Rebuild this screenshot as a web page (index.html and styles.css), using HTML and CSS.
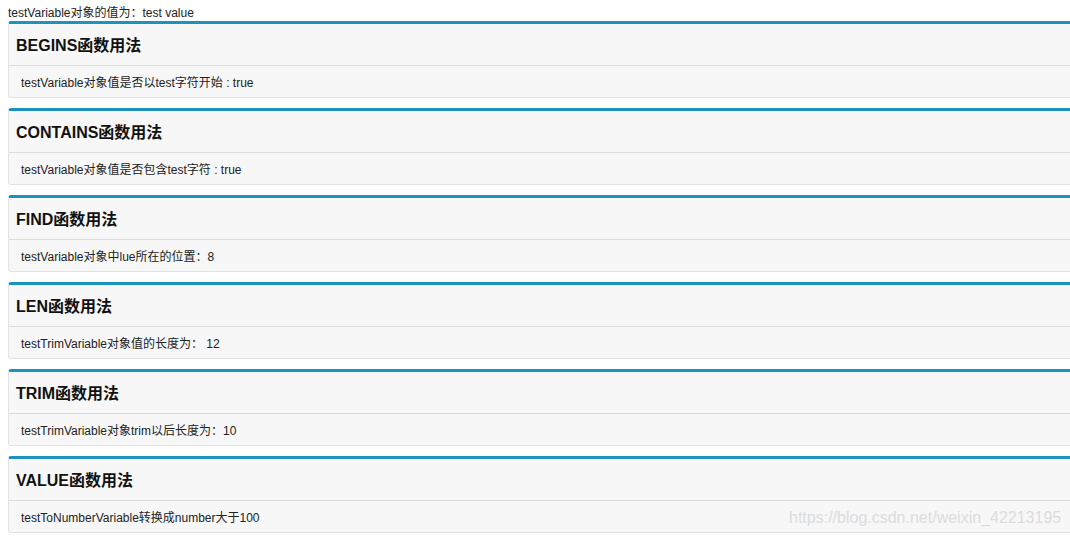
FILE: index.html
```html
<!DOCTYPE html>
<html lang="zh">
<head>
<meta charset="utf-8">
<link rel="stylesheet" href="styles.css">
</head>
<body>
<div class="intro">testVariable对象的值为：test value</div>
<div class="panel">
  <div class="panel-head">BEGINS函数用法</div>
  <div class="panel-body">testVariable对象值是否以test字符开始 : true</div>
</div>
<div class="panel">
  <div class="panel-head">CONTAINS函数用法</div>
  <div class="panel-body">testVariable对象值是否包含test字符 : true</div>
</div>
<div class="panel">
  <div class="panel-head">FIND函数用法</div>
  <div class="panel-body">testVariable对象中lue所在的位置：8</div>
</div>
<div class="panel">
  <div class="panel-head">LEN函数用法</div>
  <div class="panel-body">testTrimVariable对象值的长度为： 12</div>
</div>
<div class="panel">
  <div class="panel-head">TRIM函数用法</div>
  <div class="panel-body">testTrimVariable对象trim以后长度为：10</div>
</div>
<div class="panel">
  <div class="panel-head">VALUE函数用法</div>
  <div class="panel-body">testToNumberVariable转换成number大于100</div>
</div>
<div class="watermark">https://blog.csdn.net/weixin_42213195</div>
</body>
</html>
```
FILE: styles.css
```css
html, body {
  background: #fff;
}
body {
  margin: 0 0 0 8px;
  font-family: "Liberation Sans", Arial, "Noto Sans CJK SC", sans-serif;
  font-size: 12px;
  color: #222;
  position: relative;
  overflow: hidden;
  height: 536px;
}
.intro {
  padding-top: 6px;
  line-height: 15px;
  height: 15px;
  white-space: nowrap;
}
.panel {
  border: 1px solid #e2e2e2;
  border-top: 3px solid #1a93bf;
  border-radius: 3px;
  background: #f7f7f7;
  margin-bottom: 10px;
  width: 1080px;
}
.panel-head {
  height: 41px;
  line-height: 43px;
  padding-left: 7px;
  font-size: 16px;
  font-weight: bold;
  color: #111;
  border-bottom: 1px solid #dcdcdc;
}
.panel-body {
  height: 29px;
  padding-top: 2px;
  line-height: 31px;
  padding-left: 12px;
  color: #222;
}
.watermark {
  position: absolute;
  left: 781px;
  top: 508px;
  font-size: 16px;
  line-height: 20px;
  color: #dcdcdc;
  white-space: nowrap;
}
```
